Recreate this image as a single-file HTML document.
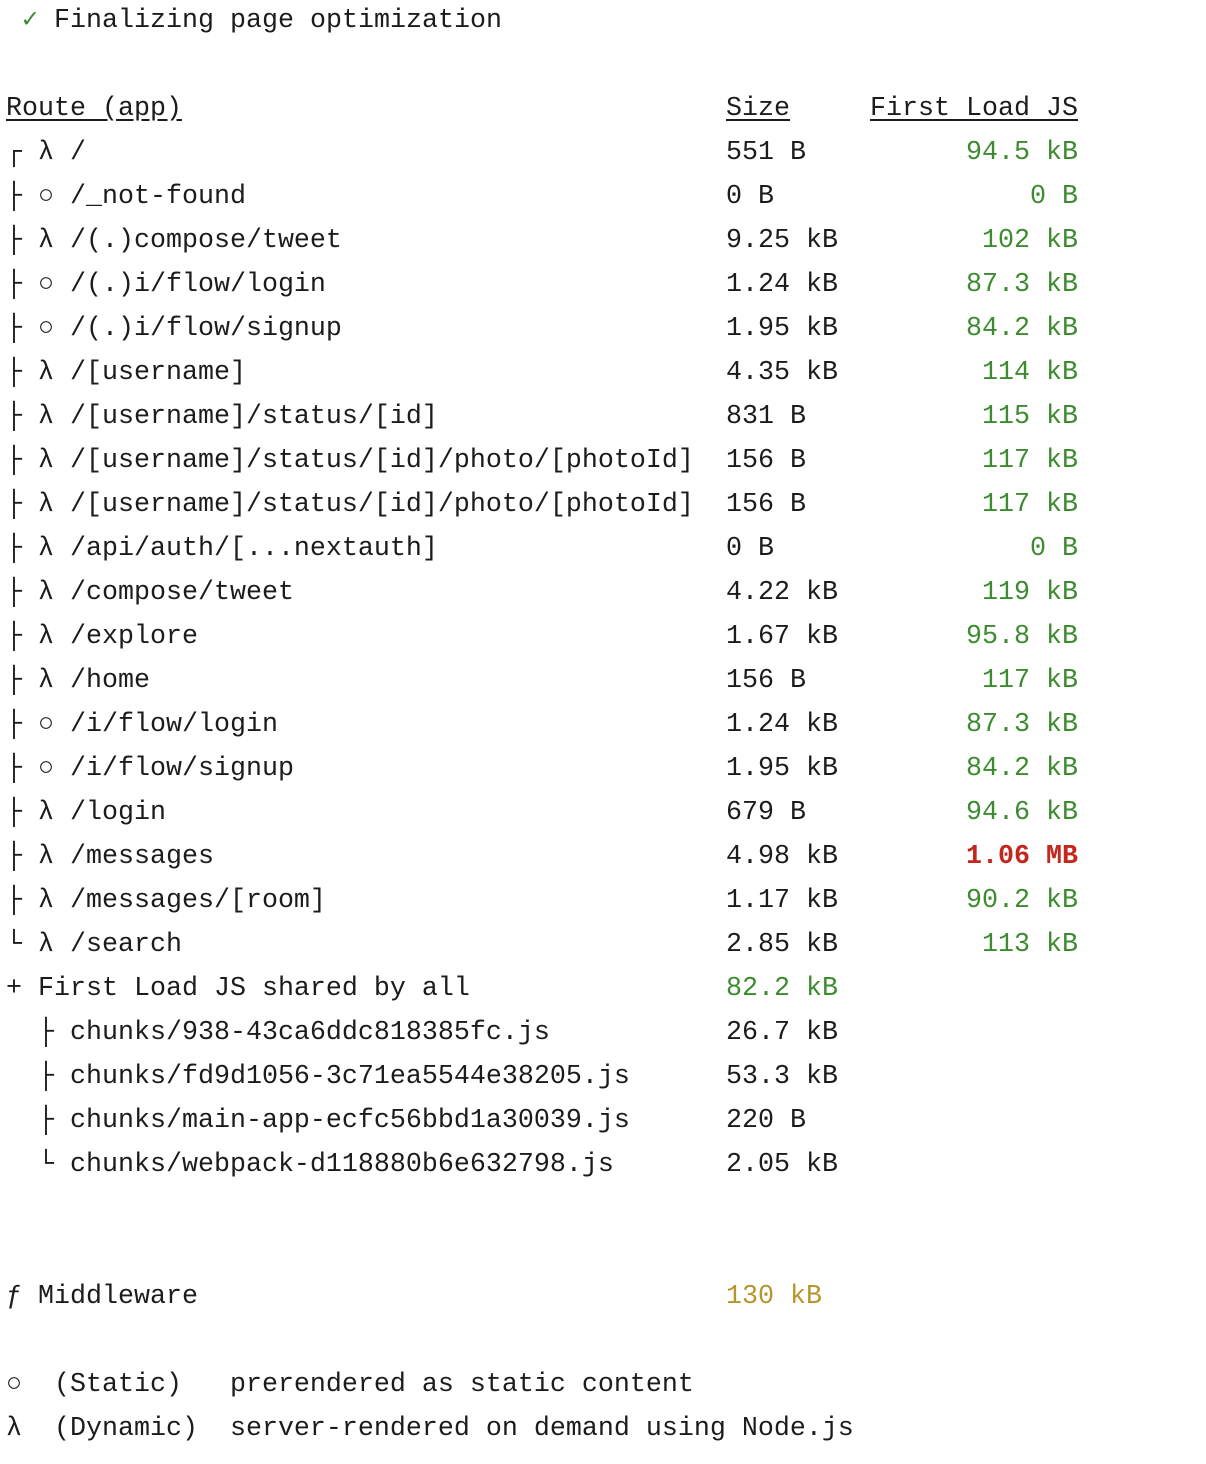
<!DOCTYPE html>
<html><head><meta charset="utf-8"><style>
html,body{margin:0;padding:0;background:#fff;width:1206px;height:1464px;overflow:hidden}
.w{position:absolute;left:6px;top:-1px;font-family:"Liberation Mono","DejaVu Sans Mono",monospace;font-size:26.667px;color:#1c1c1c}
.r{height:44px;line-height:44px;white-space:pre}
.a{display:inline-block;width:720px;white-space:pre;vertical-align:top}
.b{display:inline-block;width:144px;white-space:pre;vertical-align:top}
.c{display:inline-block;width:208px;text-align:right;white-space:pre;vertical-align:top}
.g{color:#3d8b2f}.red{color:#c4271d;font-weight:bold}.y{color:#b5952c}
.u{text-decoration:underline;text-underline-offset:4px}
.ck{color:#3d8b2f;font-weight:bold}
</style></head><body><div class="w">
<div class="r"> <span class="ck">✓</span> Finalizing page optimization</div>
<div class="r"> </div>
<div class="r"><span class="a"><span class="u">Route (app)</span></span><span class="b"><span class="u">Size</span></span><span class="c"><span class="u">First Load JS</span></span></div>
<div class="r"><span class="a">┌ λ /</span><span class="b">551 B</span><span class="c g">94.5 kB</span></div>
<div class="r"><span class="a">├ ○ /_not-found</span><span class="b">0 B</span><span class="c g">0 B</span></div>
<div class="r"><span class="a">├ λ /(.)compose/tweet</span><span class="b">9.25 kB</span><span class="c g">102 kB</span></div>
<div class="r"><span class="a">├ ○ /(.)i/flow/login</span><span class="b">1.24 kB</span><span class="c g">87.3 kB</span></div>
<div class="r"><span class="a">├ ○ /(.)i/flow/signup</span><span class="b">1.95 kB</span><span class="c g">84.2 kB</span></div>
<div class="r"><span class="a">├ λ /[username]</span><span class="b">4.35 kB</span><span class="c g">114 kB</span></div>
<div class="r"><span class="a">├ λ /[username]/status/[id]</span><span class="b">831 B</span><span class="c g">115 kB</span></div>
<div class="r"><span class="a">├ λ /[username]/status/[id]/photo/[photoId]</span><span class="b">156 B</span><span class="c g">117 kB</span></div>
<div class="r"><span class="a">├ λ /[username]/status/[id]/photo/[photoId]</span><span class="b">156 B</span><span class="c g">117 kB</span></div>
<div class="r"><span class="a">├ λ /api/auth/[...nextauth]</span><span class="b">0 B</span><span class="c g">0 B</span></div>
<div class="r"><span class="a">├ λ /compose/tweet</span><span class="b">4.22 kB</span><span class="c g">119 kB</span></div>
<div class="r"><span class="a">├ λ /explore</span><span class="b">1.67 kB</span><span class="c g">95.8 kB</span></div>
<div class="r"><span class="a">├ λ /home</span><span class="b">156 B</span><span class="c g">117 kB</span></div>
<div class="r"><span class="a">├ ○ /i/flow/login</span><span class="b">1.24 kB</span><span class="c g">87.3 kB</span></div>
<div class="r"><span class="a">├ ○ /i/flow/signup</span><span class="b">1.95 kB</span><span class="c g">84.2 kB</span></div>
<div class="r"><span class="a">├ λ /login</span><span class="b">679 B</span><span class="c g">94.6 kB</span></div>
<div class="r"><span class="a">├ λ /messages</span><span class="b">4.98 kB</span><span class="c red">1.06 MB</span></div>
<div class="r"><span class="a">├ λ /messages/[room]</span><span class="b">1.17 kB</span><span class="c g">90.2 kB</span></div>
<div class="r"><span class="a">└ λ /search</span><span class="b">2.85 kB</span><span class="c g">113 kB</span></div>
<div class="r"><span class="a">+ First Load JS shared by all</span><span class="b g">82.2 kB</span></div>
<div class="r"><span class="a">  ├ chunks/938-43ca6ddc818385fc.js</span><span class="b">26.7 kB</span></div>
<div class="r"><span class="a">  ├ chunks/fd9d1056-3c71ea5544e38205.js</span><span class="b">53.3 kB</span></div>
<div class="r"><span class="a">  ├ chunks/main-app-ecfc56bbd1a30039.js</span><span class="b">220 B</span></div>
<div class="r"><span class="a">  └ chunks/webpack-d118880b6e632798.js</span><span class="b">2.05 kB</span></div>
<div class="r"> </div>
<div class="r"> </div>
<div class="r"><span class="a">ƒ Middleware</span><span class="b y">130 kB</span></div>
<div class="r"> </div>
<div class="r">○  (Static)   prerendered as static content</div>
<div class="r">λ  (Dynamic)  server-rendered on demand using Node.js</div>
</div></body></html>
